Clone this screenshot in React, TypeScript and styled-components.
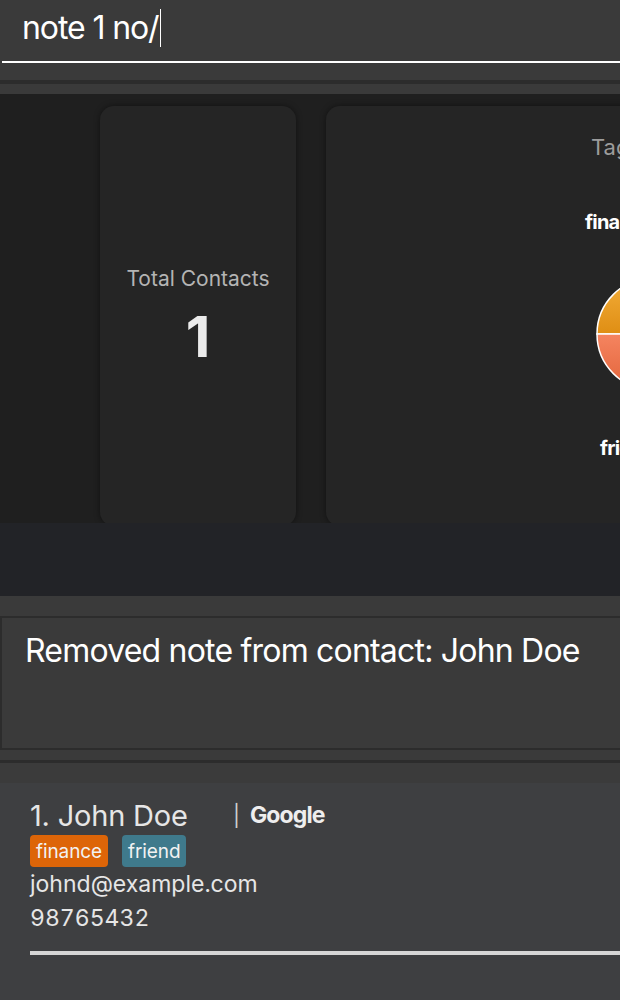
import React from 'react';
import styled, { createGlobalStyle } from 'styled-components';

const GlobalStyle = createGlobalStyle`
  html, body {
    margin: 0;
    padding: 0;
    background: #3a3a3a;
  }
  * {
    box-sizing: border-box;
  }
`;

const Window = styled.div`
  width: 620px;
  height: 1000px;
  overflow: hidden;
  background: #3a3a3a;
  font-family: Inter, 'Noto Sans', sans-serif;
  display: flex;
  flex-direction: column;
`;

const CommandBox = styled.div`
  height: 80px;
  flex-shrink: 0;
  background: #3a3a3a;
  padding: 0 0 0 2px;
`;

const CommandInput = styled.div`
  height: 63px;
  border-bottom: 2px solid #ffffff;
  padding: 0 0 6px 20px;
  display: flex;
  align-items: center;
  color: #ffffff;
  font-size: 32px;
  letter-spacing: -1.1px;
  white-space: nowrap;
`;

const Caret = styled.span`
  display: inline-block;
  width: 1.5px;
  height: 38px;
  margin-left: 1px;
  background: #ffffff;
`;

const Divider = styled.div<{ $h: number; $color: string }>`
  height: ${(p) => p.$h}px;
  flex-shrink: 0;
  background: ${(p) => p.$color};
`;

const StatsPanel = styled.div`
  height: 429px;
  flex-shrink: 0;
  background: #1f1f1f;
  padding: 12px 0 0 100px;
  display: flex;
  gap: 30px;
  overflow: hidden;
`;

const Card = styled.div<{ $w: number }>`
  width: ${(p) => p.$w}px;
  flex-shrink: 0;
  height: 420px;
  background: #252525;
  border-radius: 14px;
  box-shadow: 0 0 6px rgba(0, 0, 0, 0.45);
`;

const TotalCard = styled(Card)`
  display: flex;
  flex-direction: column;
  align-items: center;
  padding-top: 158px;
`;

const StatLabel = styled.div`
  color: #b4b4b4;
  font-size: 21px;
  line-height: 30px;
`;

const StatValue = styled.div`
  color: #ebebeb;
  font-size: 57px;
  font-weight: 700;
  line-height: 60px;
  margin-top: 13px;
`;

const ChartCard = styled(Card)`
  display: flex;
  flex-direction: column;
  padding-top: 26px;
`;

const ChartTitle = styled.div`
  color: #9c9c9c;
  font-size: 22px;
  line-height: 30px;
  margin-left: 265px;
  white-space: nowrap;
`;

const ChartLabel = styled.text`
  fill: #ffffff;
  font-family: Inter, 'Noto Sans', sans-serif;
  font-size: 20px;
  font-weight: 700;
  letter-spacing: -0.8px;
`;

const BlankBand = styled.div`
  height: 73px;
  flex-shrink: 0;
  background: #222327;
`;

const ResultBox = styled.div`
  height: 134px;
  flex-shrink: 0;
  border: 2px solid #2c2c2c;
  border-right: none;
  background: #3a3a3a;
  padding: 13px 0 0 23px;
  color: #ffffff;
  font-size: 32px;
  letter-spacing: -0.8px;
  white-space: nowrap;
`;

const ListCell = styled.div`
  flex: 1;
  background: #3e3f41;
  padding: 14px 0 0 30px;
  color: #e8e8e8;
`;

const NameRow = styled.div`
  display: flex;
  align-items: center;
  height: 36px;
`;

const Name = styled.span`
  width: 203px;
  font-size: 29px;
  letter-spacing: -0.2px;
  color: #e6e6e6;
`;

const Sep = styled.span`
  font-size: 21px;
  color: #d0d0d0;
  margin-right: 10px;
`;

const Company = styled.span`
  font-size: 23px;
  font-weight: 700;
  letter-spacing: -0.9px;
  color: #eeeeee;
`;

const TagRow = styled.div`
  display: flex;
  gap: 14px;
  margin-top: 2px;
`;

const Tag = styled.span<{ $bg: string }>`
  height: 32px;
  padding: 0 6px;
  display: inline-flex;
  align-items: center;
  border-radius: 4px;
  background: ${(p) => p.$bg};
  color: #f2f2f2;
  font-size: 19px;
  letter-spacing: -0.1px;
`;

const InfoLine = styled.div`
  font-size: 23px;
  line-height: 34px;
  color: #e6e6e6;
  font-variant-numeric: tabular-nums;
`;

const CellRule = styled.div`
  height: 4px;
  margin-top: 16px;
  background: #d6d6d6;
`;

const cx = 327;
const cy = 172;
const r = 56;

export default function App() {
  return (
    <Window>
      <GlobalStyle />
      <CommandBox>
        <CommandInput>
          note 1 no/
          <Caret />
        </CommandInput>
      </CommandBox>
      <Divider $h={4} $color="#2c2c2c" />
      <Divider $h={10} $color="#3a3a3a" />
      <StatsPanel>
        <TotalCard $w={196}>
          <StatLabel>Total Contacts</StatLabel>
          <StatValue>1</StatValue>
        </TotalCard>
        <ChartCard $w={560}>
          <ChartTitle>Tags Distribution</ChartTitle>
          <svg width="560" height="360" viewBox="0 0 560 360">
            <defs>
              <linearGradient id="gFin" x1="0" y1="0" x2="0" y2="1">
                <stop offset="0" stopColor="#f3ae3a" />
                <stop offset="1" stopColor="#df8e14" />
              </linearGradient>
              <linearGradient id="gFri" x1="0" y1="0" x2="0" y2="1">
                <stop offset="0" stopColor="#f58460" />
                <stop offset="1" stopColor="#e2643a" />
              </linearGradient>
            </defs>
            <ChartLabel x={259} y={67}>finance</ChartLabel>
            <path
              d={`M ${cx - r} ${cy} A ${r} ${r} 0 0 1 ${cx + r} ${cy} Z`}
              fill="url(#gFin)"
              stroke="#ffffff"
              strokeWidth={1.5}
            />
            <path
              d={`M ${cx + r} ${cy} A ${r} ${r} 0 0 1 ${cx - r} ${cy} Z`}
              fill="url(#gFri)"
              stroke="#ffffff"
              strokeWidth={1.5}
            />
            <ChartLabel x={274} y={293}>friend</ChartLabel>
          </svg>
        </ChartCard>
      </StatsPanel>
      <BlankBand />
      <Divider $h={20} $color="#3a3a3a" />
      <ResultBox>Removed note from contact: John Doe</ResultBox>
      <Divider $h={10} $color="#3a3a3a" />
      <Divider $h={3} $color="#2c2c2c" />
      <Divider $h={20} $color="#3b3b3b" />
      <ListCell>
        <NameRow>
          <Name>1. John Doe</Name>
          <Sep>|</Sep>
          <Company>Google</Company>
        </NameRow>
        <TagRow>
          <Tag $bg="#dd6508">finance</Tag>
          <Tag $bg="#3f7a8c">friend</Tag>
        </TagRow>
        <InfoLine>johnd@example.com</InfoLine>
        <InfoLine>98765432</InfoLine>
        <CellRule />
      </ListCell>
    </Window>
  );
}
